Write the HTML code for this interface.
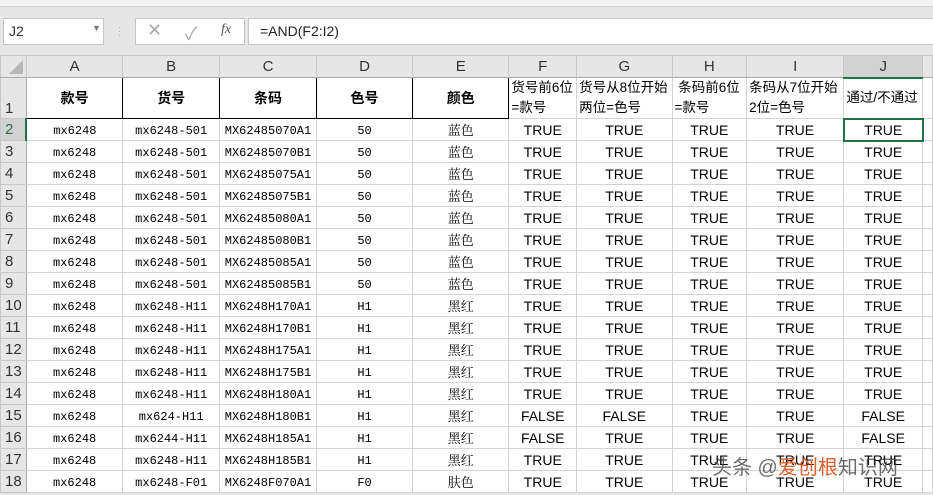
<!DOCTYPE html>
<html><head><meta charset="utf-8"><style>
*{margin:0;padding:0;box-sizing:border-box}
body{width:933px;height:495px;overflow:hidden;background:#e6e6e6;font-family:"Liberation Sans","Noto Sans CJK SC",sans-serif;position:relative}
.rib{position:absolute;left:0;top:0;width:933px;height:7px;background:#f3f3f3;border-bottom:1px solid #d4d4d4}
.box{position:absolute;top:18px;height:27px;background:#fff;border:1px solid #c6c6c6}
table{position:absolute;left:0;top:55px;border-collapse:collapse;table-layout:fixed;background:#fff}
td{border:1px solid #d4d4d4;height:22px;text-align:center;font-size:14px;color:#000;white-space:nowrap;overflow:hidden;padding:0}
tr.ch td{background:#e6e6e6;color:#333;font-size:15px;height:22px;border-color:#c8c8c8;border-bottom:1px solid #ababab}
td.rh{background:#e6e6e6;color:#333;font-size:15px;text-align:left;padding-left:4px;border-color:#c8c8c8;border-right:1px solid #ababab}
td.m{font-family:"Liberation Mono","Noto Serif CJK SC",monospace;font-size:12px;padding-top:3px}
td.c{font-family:"Noto Serif CJK SC",serif;font-size:13px}
tr.h td{height:41px}
tr.h td.b{font-weight:bold;font-size:14px;font-family:"Noto Sans CJK SC",sans-serif;border:1px solid #000}
tr.h td.t{text-align:left;font-size:13.5px;line-height:20px;white-space:normal;vertical-align:top;padding:0 0 0 2px}
</style></head><body>
<div class="rib"></div>
<div class="box" style="left:3px;width:101px"><span style="position:absolute;left:5px;top:4px;font-size:14px;color:#333">J2</span><span style="position:absolute;left:88px;top:4px;font-size:9px;color:#777">▼</span></div>
<div style="position:absolute;left:118px;top:26px;color:#aaa;font-size:10px;line-height:4px">·<br>·<br>·</div>
<div class="box" style="left:135px;width:110px"><span style="position:absolute;left:11px;top:1px;font-size:18px;color:#aaa">✕</span><span style="position:absolute;left:49px;top:1px;font-size:18px;color:#aaa">✓</span><span style="position:absolute;left:85px;top:3px;font-size:14px;font-style:italic;font-family:'Liberation Serif',serif;color:#555">fx</span></div>
<div class="box" style="left:248px;width:690px"><span style="position:absolute;left:11px;top:4px;font-size:14px;color:#222">=AND(F2:I2)</span></div>
<table>
<colgroup><col style="width:26px"><col style="width:97px"><col style="width:97px"><col style="width:97px"><col style="width:97px"><col style="width:97px"><col style="width:68px"><col style="width:96px"><col style="width:75px"><col style="width:98px"><col style="width:79px"><col style="width:10px"></colgroup>
<tr class="ch"><td style="position:relative"><div style="position:absolute;right:3px;bottom:3px;width:0;height:0;border-left:14px solid transparent;border-bottom:14px solid #b8b8b8"></div></td><td>A</td><td>B</td><td>C</td><td>D</td><td>E</td><td>F</td><td>G</td><td>H</td><td>I</td><td style="background:#d2d2d2;border-bottom:2px solid #217346">J</td><td></td></tr>
<tr class="h"><td class="rh" style="vertical-align:bottom;padding-bottom:1px">1</td><td class="b">款号</td><td class="b">货号</td><td class="b">条码</td><td class="b">色号</td><td class="b">颜色</td><td class="t">货号前6位=款号</td><td class="t">货号从8位开始两位=色号</td><td class="t">&nbsp;条码前6位=款号</td><td class="t">条码从7位开始2位=色号</td><td class="t" style="vertical-align:middle">通过/不通过</td><td></td></tr>
<tr><td class="rh" style="background:#d2d2d2;color:#217346;border-right:2px solid #217346">2</td><td class="m">mx6248</td><td class="m">mx6248-501</td><td class="m">MX62485070A1</td><td class="m">50</td><td class="c">蓝色</td><td>TRUE</td><td>TRUE</td><td>TRUE</td><td>TRUE</td><td style="border:2px solid #217346">TRUE</td><td></td></tr>
<tr><td class="rh">3</td><td class="m">mx6248</td><td class="m">mx6248-501</td><td class="m">MX62485070B1</td><td class="m">50</td><td class="c">蓝色</td><td>TRUE</td><td>TRUE</td><td>TRUE</td><td>TRUE</td><td>TRUE</td><td></td></tr>
<tr><td class="rh">4</td><td class="m">mx6248</td><td class="m">mx6248-501</td><td class="m">MX62485075A1</td><td class="m">50</td><td class="c">蓝色</td><td>TRUE</td><td>TRUE</td><td>TRUE</td><td>TRUE</td><td>TRUE</td><td></td></tr>
<tr><td class="rh">5</td><td class="m">mx6248</td><td class="m">mx6248-501</td><td class="m">MX62485075B1</td><td class="m">50</td><td class="c">蓝色</td><td>TRUE</td><td>TRUE</td><td>TRUE</td><td>TRUE</td><td>TRUE</td><td></td></tr>
<tr><td class="rh">6</td><td class="m">mx6248</td><td class="m">mx6248-501</td><td class="m">MX62485080A1</td><td class="m">50</td><td class="c">蓝色</td><td>TRUE</td><td>TRUE</td><td>TRUE</td><td>TRUE</td><td>TRUE</td><td></td></tr>
<tr><td class="rh">7</td><td class="m">mx6248</td><td class="m">mx6248-501</td><td class="m">MX62485080B1</td><td class="m">50</td><td class="c">蓝色</td><td>TRUE</td><td>TRUE</td><td>TRUE</td><td>TRUE</td><td>TRUE</td><td></td></tr>
<tr><td class="rh">8</td><td class="m">mx6248</td><td class="m">mx6248-501</td><td class="m">MX62485085A1</td><td class="m">50</td><td class="c">蓝色</td><td>TRUE</td><td>TRUE</td><td>TRUE</td><td>TRUE</td><td>TRUE</td><td></td></tr>
<tr><td class="rh">9</td><td class="m">mx6248</td><td class="m">mx6248-501</td><td class="m">MX62485085B1</td><td class="m">50</td><td class="c">蓝色</td><td>TRUE</td><td>TRUE</td><td>TRUE</td><td>TRUE</td><td>TRUE</td><td></td></tr>
<tr><td class="rh">10</td><td class="m">mx6248</td><td class="m">mx6248-H11</td><td class="m">MX6248H170A1</td><td class="m">H1</td><td class="c">黑红</td><td>TRUE</td><td>TRUE</td><td>TRUE</td><td>TRUE</td><td>TRUE</td><td></td></tr>
<tr><td class="rh">11</td><td class="m">mx6248</td><td class="m">mx6248-H11</td><td class="m">MX6248H170B1</td><td class="m">H1</td><td class="c">黑红</td><td>TRUE</td><td>TRUE</td><td>TRUE</td><td>TRUE</td><td>TRUE</td><td></td></tr>
<tr><td class="rh">12</td><td class="m">mx6248</td><td class="m">mx6248-H11</td><td class="m">MX6248H175A1</td><td class="m">H1</td><td class="c">黑红</td><td>TRUE</td><td>TRUE</td><td>TRUE</td><td>TRUE</td><td>TRUE</td><td></td></tr>
<tr><td class="rh">13</td><td class="m">mx6248</td><td class="m">mx6248-H11</td><td class="m">MX6248H175B1</td><td class="m">H1</td><td class="c">黑红</td><td>TRUE</td><td>TRUE</td><td>TRUE</td><td>TRUE</td><td>TRUE</td><td></td></tr>
<tr><td class="rh">14</td><td class="m">mx6248</td><td class="m">mx6248-H11</td><td class="m">MX6248H180A1</td><td class="m">H1</td><td class="c">黑红</td><td>TRUE</td><td>TRUE</td><td>TRUE</td><td>TRUE</td><td>TRUE</td><td></td></tr>
<tr><td class="rh">15</td><td class="m">mx6248</td><td class="m">mx624-H11</td><td class="m">MX6248H180B1</td><td class="m">H1</td><td class="c">黑红</td><td>FALSE</td><td>FALSE</td><td>TRUE</td><td>TRUE</td><td>FALSE</td><td></td></tr>
<tr><td class="rh">16</td><td class="m">mx6248</td><td class="m">mx6244-H11</td><td class="m">MX6248H185A1</td><td class="m">H1</td><td class="c">黑红</td><td>FALSE</td><td>TRUE</td><td>TRUE</td><td>TRUE</td><td>FALSE</td><td></td></tr>
<tr><td class="rh">17</td><td class="m">mx6248</td><td class="m">mx6248-H11</td><td class="m">MX6248H185B1</td><td class="m">H1</td><td class="c">黑红</td><td>TRUE</td><td>TRUE</td><td>TRUE</td><td>TRUE</td><td>TRUE</td><td></td></tr>
<tr><td class="rh">18</td><td class="m">mx6248</td><td class="m">mx6248-F01</td><td class="m">MX6248F070A1</td><td class="m">F0</td><td class="c">肤色</td><td>TRUE</td><td>TRUE</td><td>TRUE</td><td>TRUE</td><td>TRUE</td><td></td></tr>
</table>
<div style="position:absolute;left:712px;top:451px;font-size:20px;color:rgba(60,60,60,0.75);white-space:nowrap;font-family:'Liberation Sans','Noto Sans CJK SC',sans-serif">头条 @<span style="color:#e0602a">爱创根</span>知识网</div>
</body></html>
